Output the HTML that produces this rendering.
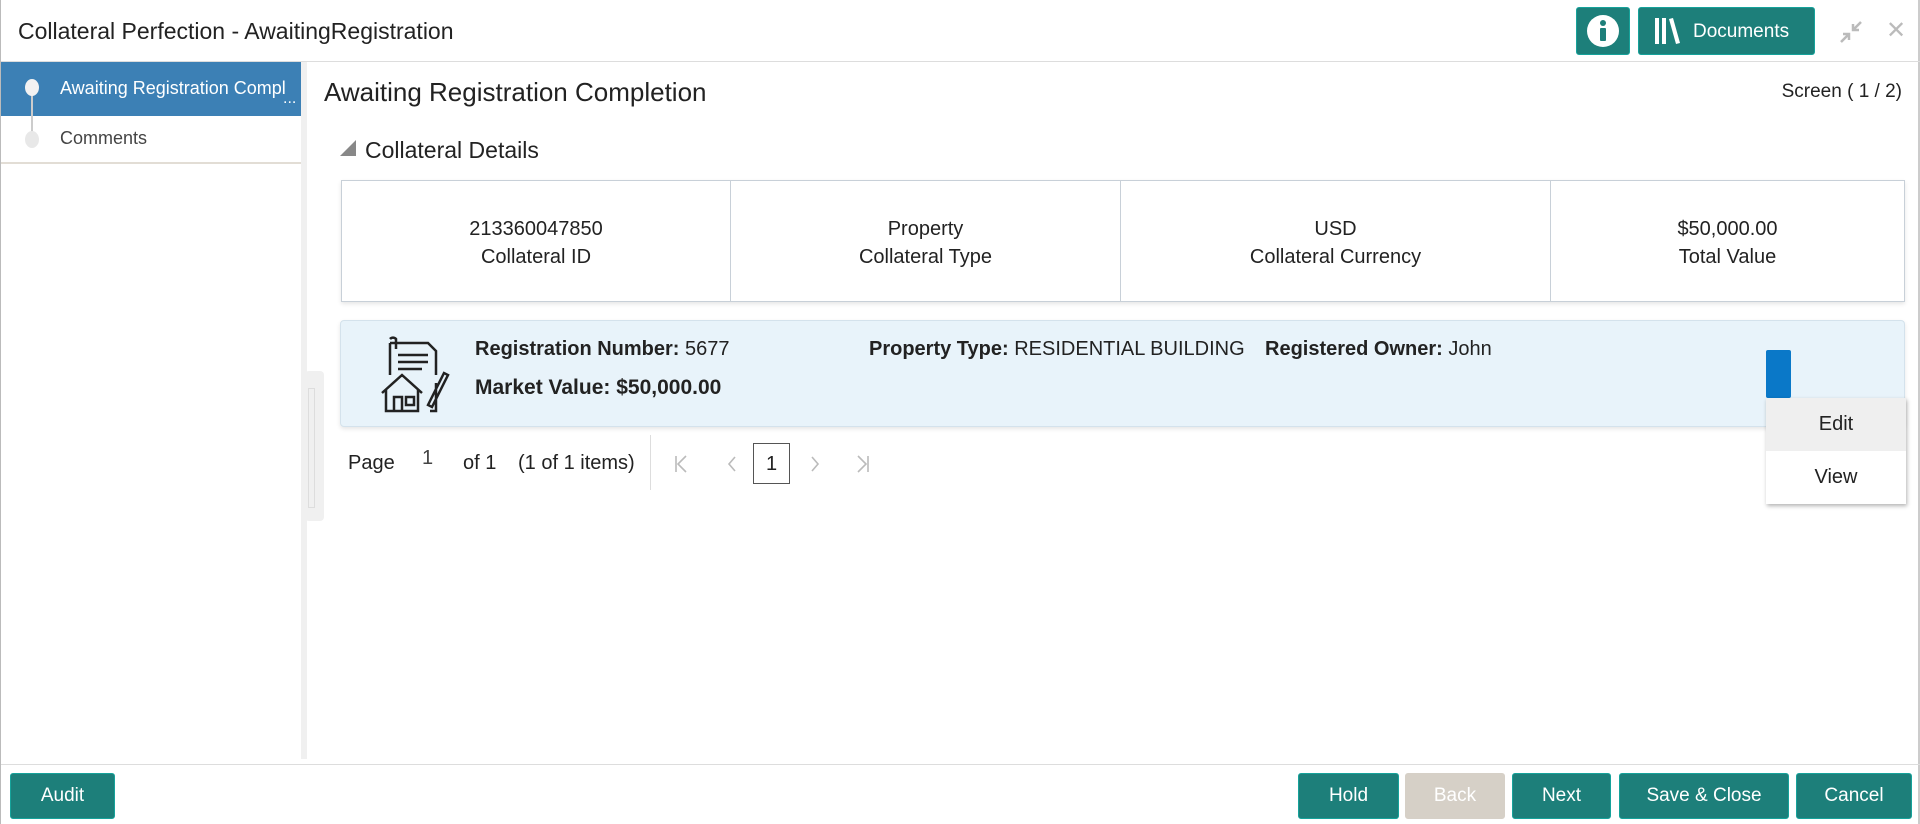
<!DOCTYPE html>
<html><head><meta charset="utf-8"><style>
*{box-sizing:border-box;margin:0;padding:0}
body{width:1920px;height:824px;overflow:hidden;background:#fff;font-family:"Liberation Sans",sans-serif;color:#222;position:relative;border-left:1px solid #bbb;border-right:2px solid #ccc}
.a{position:absolute;white-space:nowrap}
.btn{position:absolute;background:#1d7f7a;color:#fff;border-radius:3px;font-size:19px;display:flex;align-items:center;justify-content:center;border:1px solid #16a39b}
.cell{position:absolute;top:0;height:120px;text-align:center;font-size:20px;line-height:28px;padding-top:34px;border-right:1px solid #c8d0d8}
</style></head><body>
<div class="a" style="left:17px;top:18px;font-size:23px;color:#222">Collateral Perfection - AwaitingRegistration</div>
<div class="btn" style="left:1575px;top:7px;width:54px;height:48px"><svg width="34" height="34" viewBox="0 0 34 34"><circle cx="17" cy="17" r="16" fill="#fff"/><circle cx="17" cy="9" r="3" fill="#1d7f7a"/><rect x="14" y="14" width="6" height="13" rx="1" fill="#1d7f7a"/></svg></div>
<div class="btn" style="left:1637px;top:7px;width:177px;height:48px;justify-content:flex-start;padding-left:14px"><svg width="32" height="30" viewBox="0 0 32 30"><rect x="2" y="2" width="4" height="26" fill="#fff"/><rect x="9" y="2" width="4" height="26" fill="#fff"/><path d="M16 3 L20 2 L27 27 L23 28Z" fill="#fff"/></svg><span style="margin-left:8px;margin-top:2px">Documents</span></div>
<svg class="a" style="left:1838px;top:20px" width="24" height="24" viewBox="0 0 24 24"><path d="M22 2 L14 10 M14 4 V10 H20 M2 22 L10 14 M4 14 H10 V20" stroke="#bbb" stroke-width="2.5" fill="none"/></svg>
<div class="a" style="left:1885px;top:16px;font-size:24px;color:#bbb">✕</div>
<div class="a" style="left:0;top:61px;width:1920px;height:1px;background:#ddd"></div>
<div class="a" style="left:0;top:62px;width:300px;height:54px;background:#3c80b5"></div>
<div class="a" style="left:0;top:116px;width:300px;height:48px;border-bottom:2px solid #e2ddd5"></div>
<div class="a" style="left:30px;top:90px;width:2px;height:46px;background:#ccc"></div>
<div class="a" style="left:24px;top:79px;width:14px;height:17px;border-radius:50%;background:#f2f2f2"></div>
<div class="a" style="left:24px;top:131px;width:14px;height:17px;border-radius:50%;background:#e8e8e8"></div>
<div class="a" style="left:59px;top:78px;font-size:18px;color:#fff;width:230px;overflow:hidden">Awaiting Registration Compl</div>
<div class="a" style="left:282px;top:90px;font-size:16px;color:#fff">...</div>
<div class="a" style="left:59px;top:128px;font-size:18px;color:#444">Comments</div>
<div class="a" style="left:300px;top:62px;width:6px;height:697px;background:#f0f0f0"></div>
<div class="a" style="left:304px;top:371px;width:19px;height:150px;background:#f0f0f0;border-radius:4px"></div>
<div class="a" style="left:307px;top:388px;width:7px;height:120px;border:1px solid #ddd"></div>
<div class="a" style="left:323px;top:77px;font-size:26px;color:#222">Awaiting Registration Completion</div>
<div class="a" style="right:16px;top:81px;font-size:19px">Screen ( 1 / 2)</div>
<div class="a" style="left:339px;top:140px;width:0;height:0;border-left:16px solid transparent;border-bottom:16px solid #888"></div>
<div class="a" style="left:364px;top:137px;font-size:23px">Collateral Details</div>
<div class="a" style="left:340px;top:180px;width:1564px;height:122px;border:1px solid #c8d0d8;box-shadow:0 2px 4px rgba(0,0,0,.1)">
<div class="cell" style="left:0;width:389px">213360047850<br>Collateral ID</div>
<div class="cell" style="left:389px;width:390px">Property<br>Collateral Type</div>
<div class="cell" style="left:779px;width:430px">USD<br>Collateral Currency</div>
<div class="cell" style="left:1209px;width:353px;border:none">$50,000.00<br>Total Value</div>
</div>
<div class="a" style="left:339px;top:320px;width:1565px;height:107px;background:#e8f3fa;border:1px solid #d4e2ec;border-radius:4px;box-shadow:0 2px 4px rgba(0,0,0,.1)"></div>
<svg class="a" style="left:377px;top:335px" width="72" height="78" viewBox="0 0 72 78" fill="none" stroke="#222" stroke-width="2.5"><path d="M12 8 V40 M12 8 H50 L58 16 V40 M20 20 H50 M20 27 H50 M20 34 H44"/><path d="M12 4 a4 4 0 0 1 6 0 V14"/><path d="M4 58 L24 40 L44 58 M8 54 V76 H40 V54 M16 76 V62 H24 V76 M28 62 H36 V70 H28Z"/><path d="M52 76 H58 V48 M50 70 L66 38 L70 40 L54 72 Z"/></svg>
<div class="a" style="left:474px;top:338px;font-size:20px"><b>Registration Number:</b> 5677</div>
<div class="a" style="left:474px;top:376px;font-size:21px"><b>Market Value: $50,000.00</b></div>
<div class="a" style="left:868px;top:338px;font-size:20px"><b>Property Type:</b> RESIDENTIAL BUILDING</div>
<div class="a" style="left:1264px;top:338px;font-size:20px"><b>Registered Owner:</b> John</div>
<div class="a" style="left:1765px;top:350px;width:25px;height:48px;background:#0a78c8;border-radius:2px"></div>
<div class="a" style="left:1765px;top:398px;width:140px;height:106px;background:#fff;box-shadow:1px 2px 4px rgba(0,0,0,.3)">
<div style="height:53px;background:#efefef;font-size:20px;text-align:center;line-height:53px">Edit</div>
<div style="height:53px;font-size:20px;text-align:center;line-height:53px">View</div></div>
<div class="a" style="left:347px;top:452px;font-size:20px">Page</div>
<div class="a" style="left:421px;top:447px;font-size:20px;color:#444">1</div>
<div class="a" style="left:462px;top:452px;font-size:20px">of 1</div>
<div class="a" style="left:517px;top:452px;font-size:20px">(1 of 1 items)</div>
<div class="a" style="left:649px;top:435px;width:1px;height:55px;background:#ddd"></div>
<svg class="a" style="left:672px;top:454px" width="200" height="20" viewBox="0 0 200 20" fill="none" stroke="#bbb" stroke-width="1.6"><path d="M3 2 V18 M13 2 L5 10 L13 18"/><path d="M62 3 L56 10 L62 17"/><path d="M139 3 L145 10 L139 17"/><path d="M185 2 L193 10 L185 18 M195 2 V18"/></svg>
<div class="a" style="left:752px;top:443px;width:37px;height:41px;border:1px solid #555;font-size:20px;text-align:center;line-height:40px">1</div>
<div class="a" style="left:0;top:764px;width:1920px;height:1px;background:#ddd"></div>
<div class="btn" style="left:9px;top:773px;width:105px;height:46px">Audit</div>
<div class="btn" style="left:1297px;top:773px;width:101px;height:46px">Hold</div>
<div class="btn" style="left:1404px;top:773px;width:100px;height:46px;background:#d6d0c7;border-color:#d6d0c7">Back</div>
<div class="btn" style="left:1511px;top:773px;width:99px;height:46px">Next</div>
<div class="btn" style="left:1618px;top:773px;width:170px;height:46px">Save &amp; Close</div>
<div class="btn" style="left:1795px;top:773px;width:116px;height:46px">Cancel</div>
</body></html>
